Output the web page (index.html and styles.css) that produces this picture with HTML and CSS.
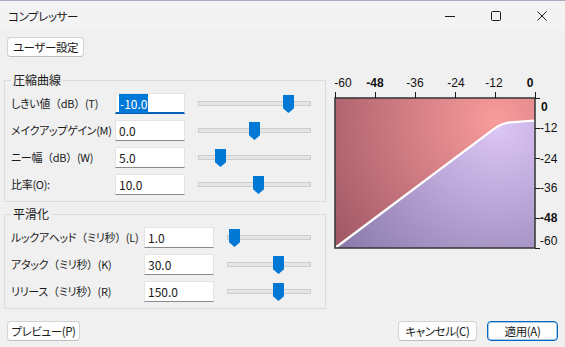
FILE: index.html
```html
<!DOCTYPE html>
<html lang="ja">
<head>
  <meta charset="UTF-8" />
  <title>コンプレッサー</title>
  <link rel="stylesheet" href="styles.css">
</head>
<body>
  <div class="window">
    <div class="titlebar">
      <span class="title">コンプレッサー</span>
      <div class="controls">
        <div class="ctrl">
          <svg width="12" height="12" viewBox="0 0 12 12"><path d="M1 6.5H11" stroke="#1a1a1a" stroke-width="1"/></svg>
        </div>
        <div class="ctrl">
          <svg width="12" height="12" viewBox="0 0 12 12"><rect x="1.5" y="1.5" width="9" height="9" rx="1" fill="none" stroke="#1a1a1a" stroke-width="1"/></svg>
        </div>
        <div class="ctrl">
          <svg width="12" height="12" viewBox="0 0 12 12"><path d="M1.5 1.5L10.5 10.5M10.5 1.5L1.5 10.5" stroke="#1a1a1a" stroke-width="1"/></svg>
        </div>
      </div>
    </div>

    <div class="content">
      <div class="toolbar">
        <button class="btn btn-preset">ユーザー設定</button>
      </div>

      <div class="main">
        <div class="params">
          <fieldset class="group g-curve">
            <legend>圧縮曲線</legend>
            <div class="rows">
              <span class="label">しきい値<span class="wide">（</span>dB<span class="wide">）</span>(T)</span>
              <div class="field focus"><span class="sel">-10.0</span></div>
              <div class="slider"><div class="track"></div><div class="thumb" style="left: 85px"></div></div>

              <span class="label">メイクアップゲイン(M)</span>
              <div class="field">0.0</div>
              <div class="slider"><div class="track"></div><div class="thumb" style="left: 51px"></div></div>

              <span class="label">ニー幅<span class="wide">（</span>dB<span class="wide">）</span>(W)</span>
              <div class="field">5.0</div>
              <div class="slider"><div class="track"></div><div class="thumb" style="left: 17px"></div></div>

              <span class="label">比率(O):</span>
              <div class="field">10.0</div>
              <div class="slider"><div class="track"></div><div class="thumb" style="left: 55px"></div></div>
            </div>
          </fieldset>

          <fieldset class="group g-smooth">
            <legend>平滑化</legend>
            <div class="rows">
              <span class="label">ルックアヘッド<span class="wide">（</span>ミリ秒<span class="wide">）</span>(L)</span>
              <div class="field">1.0</div>
              <div class="slider"><div class="track"></div><div class="thumb" style="left: 2px"></div></div>

              <span class="label">アタック<span class="wide">（</span>ミリ秒<span class="wide">）</span>(K)</span>
              <div class="field">30.0</div>
              <div class="slider"><div class="track"></div><div class="thumb" style="left: 46px"></div></div>

              <span class="label">リリース<span class="wide">（</span>ミリ秒<span class="wide">）</span>(R)</span>
              <div class="field">150.0</div>
              <div class="slider"><div class="track"></div><div class="thumb" style="left: 46px"></div></div>
            </div>
          </fieldset>
        </div>

        <svg class="graph" width="235" height="182" viewBox="0 0 235 182">
          <defs>
            <radialGradient id="above" gradientUnits="userSpaceOnUse" cx="166" cy="48" r="200">
              <stop offset="0" stop-color="#f99b9b"/>
              <stop offset="1" stop-color="#a05866"/>
            </radialGradient>
            <radialGradient id="below" gradientUnits="userSpaceOnUse" cx="168" cy="54" r="210">
              <stop offset="0" stop-color="#dcc6f6"/>
              <stop offset="1" stop-color="#8474a6"/>
            </radialGradient>
          </defs>
          <rect x="5" y="26" width="200" height="150" fill="url(#above)"/>
          <path d="M5 176 L163.3 57.3 L168.3 54 L171.7 52.4 L175 51.3 L178.3 50.6 L180 50.4 L205 48.5 L205 176 Z" fill="url(#below)"/>
          <path d="M5 176 L163.3 57.3 L168.3 54 L171.7 52.4 L175 51.3 L178.3 50.6 L180 50.4 L205 48.5" fill="none" stroke="#fff" stroke-width="2.2"/>
          <rect class="frame" x="5" y="26" width="200" height="150"/>

          <g class="ticks">
            <path d="M5.5 20V26M45.5 20V26M85.5 20V26M125.5 20V26M165.5 20V26M205.5 20V26"/>
            <path d="M205 26.5H210M205 56.5H210M205 86.5H210M205 116.5H210M205 146.5H210M205 176.5H210"/>
          </g>

          <g class="axis top">
            <text x="13" y="15">-60</text>
            <text x="45" y="15" class="major">-48</text>
            <text x="85" y="15">-36</text>
            <text x="126" y="15">-24</text>
            <text x="164" y="15">-12</text>
            <text x="200" y="15" class="major">0</text>
          </g>
          <g class="axis side">
            <text x="211" y="39" class="major">0</text>
            <text x="210" y="60">-12</text>
            <text x="210" y="91">-24</text>
            <text x="210" y="120">-36</text>
            <text x="210" y="150" class="major">-48</text>
            <text x="210" y="173">-60</text>
          </g>
        </svg>
      </div>

      <div class="footer">
        <button class="btn btn-preview">プレビュー(P)</button>
        <div class="spacer"></div>
        <button class="btn btn-cancel">キャンセル(C)</button>
        <button class="btn btn-apply">適用(A)</button>
      </div>
    </div>
  </div>
</body>
</html>
```

FILE: styles.css
```css
* {
  margin: 0;
  padding: 0;
  box-sizing: border-box;
}

body {
  background-color: #f0f0f0;
  color: #1a1a1a;
  font-family: "Noto Sans CJK JP", "Noto Sans", sans-serif;
  font-size: 12px;
  font-feature-settings: "palt";
}

.window {
  width: 565px;
  height: 347px;
  overflow: hidden;
  background-color: #f0f0f0;
}

/* タイトルバー */
.titlebar {
  height: 30px;
  display: flex;
  align-items: center;
  background-color: #f3f3f3;
  border-top: 1px solid #a3adbf;
}

.title {
  flex: 1;
  padding-left: 8px;
  font-size: 11.5px;
  letter-spacing: -0.4px;
  line-height: 16px;
}

.controls {
  display: flex;
}

.ctrl {
  width: 46px;
  height: 29px;
  display: flex;
  align-items: center;
  justify-content: center;
}

/* 本体 */
.content {
  padding: 7px 0 0 4px;
}

.btn {
  height: 20px;
  background-color: #fdfdfd;
  border: 1px solid #d3d3d3;
  border-bottom-color: #bdbdbd;
  border-radius: 4px;
  font: inherit;
  font-size: 11.5px;
  letter-spacing: -0.4px;
  color: #1a1a1a;
  line-height: 18px;
  text-align: center;
}

.btn-preset {
  width: 77px;
  margin-left: 3px;
}

.main {
  display: flex;
  align-items: flex-start;
  margin-top: 15px;
}

.params {
  width: 322px;
}

.graph {
  display: block;
  margin-left: 4px;
}

/* グループボックス */
.group {
  border: 1px solid #dcdcdc;
  padding: 5px 6px 6px;
  min-width: 0;
}

.group + .group {
  margin-top: 4px;
}

.group legend {
  padding: 0 2px;
  line-height: 16px;
}

.rows {
  display: grid;
  row-gap: 6px;
  align-items: center;
}

.g-curve .rows {
  grid-template-columns: 104px 70px 1fr;
}

.g-smooth .rows {
  grid-template-columns: 133px 70px 1fr;
}

.label {
  font-size: 11px;
  line-height: 21px;
  white-space: nowrap;
  letter-spacing: -0.3px;
}

/* 全角かっこは詰めない */
.wide {
  font-feature-settings: normal;
}

.field {
  height: 21px;
  background-color: #fff;
  border: 1px solid #e4e4e4;
  border-bottom-color: #8a8a8a;
  padding: 0 3px;
  line-height: 19px;
}

.field.focus {
  border-bottom: 2px solid #005fb8;
}

.sel {
  background-color: #0078d7;
  color: #fff;
  padding: 1px 1px;
}

/* スライダー */
.slider {
  position: relative;
  height: 21px;
  margin: 0 8px 0 13px;
  padding-top: 8px;
}

.track {
  height: 5px;
  background-color: #e5e5e5;
  border: 1px solid #cdcdcd;
}

.thumb {
  position: absolute;
  top: 2px;
  width: 11px;
  height: 18px;
  background-color: #0078d4;
  clip-path: polygon(0 0, 100% 0, 100% 74%, 50% 100%, 0 74%);
}

/* グラフ */
.frame {
  fill: none;
  stroke: #3c3c3c;
  stroke-width: 1.6;
}

.ticks path {
  stroke: #1a1a1a;
  stroke-width: 1;
  fill: none;
}

.axis text {
  font-family: "Liberation Sans", sans-serif;
  font-size: 12px;
  fill: #111;
}

.axis.top text {
  text-anchor: middle;
}

.axis .major {
  font-weight: bold;
}

/* 下部ボタン */
.footer {
  display: flex;
  gap: 10px;
  margin-top: 12px;
  padding: 0 7px 0 3px;
}

.spacer {
  flex: 1;
}

.btn-preview {
  width: 73px;
}

.btn-cancel {
  width: 79px;
}

.btn-apply {
  width: 71px;
  border-color: #0067c0;
  box-shadow: inset 0 0 0 1px rgba(0, 103, 192, 0.35);
}
```
